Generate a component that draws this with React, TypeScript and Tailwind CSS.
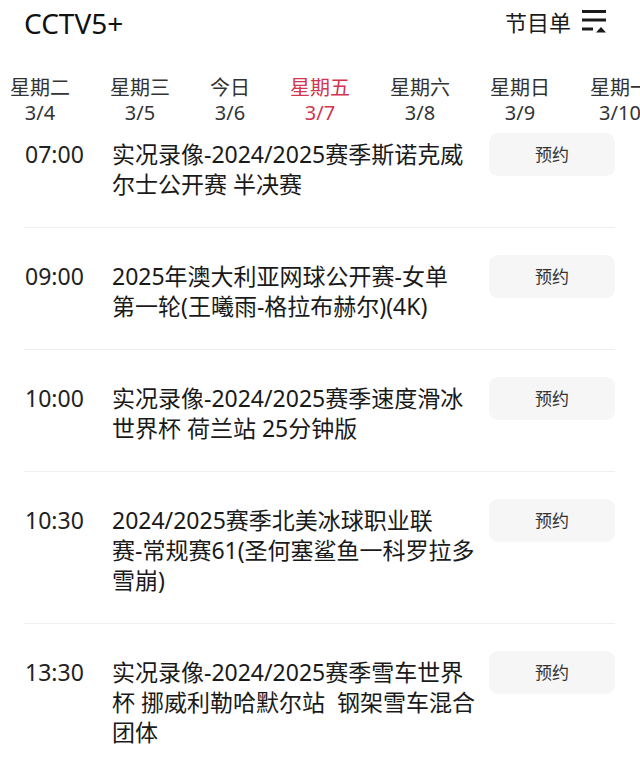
import React, { FC } from "react";

interface Day {
  label: string;
  date: string;
  active?: boolean;
}

interface Program {
  time: string;
  lines: string[];
}

const days: Day[] = [
  { label: "星期二", date: "3/4" },
  { label: "星期三", date: "3/5" },
  { label: "今日", date: "3/6" },
  { label: "星期五", date: "3/7", active: true },
  { label: "星期六", date: "3/8" },
  { label: "星期日", date: "3/9" },
  { label: "星期一", date: "3/10" },
];

const programs: Program[] = [
  { time: "07:00", lines: ["实况录像-2024/2025赛季斯诺克威", "尔士公开赛 半决赛"] },
  { time: "09:00", lines: ["2025年澳大利亚网球公开赛-女单", "第一轮(王曦雨-格拉布赫尔)(4K)"] },
  { time: "10:00", lines: ["实况录像-2024/2025赛季速度滑冰", "世界杯 荷兰站 25分钟版"] },
  {
    time: "10:30",
    lines: ["2024/2025赛季北美冰球职业联", "赛-常规赛61(圣何塞鲨鱼一科罗拉多", "雪崩)"],
  },
  {
    time: "13:30",
    lines: ["实况录像-2024/2025赛季雪车世界", "杯 挪威利勒哈默尔站  钢架雪车混合", "团体"],
  },
];

const ListIcon: FC = () => (
  <svg width="26" height="24" viewBox="0 0 26 24" fill="none">
    <line x1="1" y1="1.5" x2="25" y2="1.5" stroke="#1a1a1a" strokeWidth="3" />
    <line x1="1" y1="10" x2="25" y2="10" stroke="#1a1a1a" strokeWidth="3" />
    <line x1="1" y1="19" x2="12" y2="19" stroke="#1a1a1a" strokeWidth="3" />
    <polygon points="15,22.5 25,22.5 20,17" fill="#1a1a1a" />
  </svg>
);

const ProgramRow: FC<{ program: Program; first?: boolean }> = ({ program, first }) => (
  <div className={`flex items-start border-b border-[#efefef] pb-[28px] ${first ? "pt-[8px]" : "pt-[27px]"}`}>
    <div className="mt-[6px] w-[88px] shrink-0 pl-[1px] text-[23px] leading-[30px] text-[#222]">{program.time}</div>
    <div className="mt-[6px] mr-[9px] flex-1 text-[23px] leading-[30px] text-[#1a1a1a]">
      {program.lines.map((line, i) => (
        <div key={i} className="whitespace-pre">
          {line}
        </div>
      ))}
    </div>
    <button className="flex h-[43px] w-[126px] shrink-0 items-center justify-center rounded-[9px] bg-[#f6f6f6] text-[17px] text-[#333]">
      预约
    </button>
  </div>
);

const App: FC = () => {
  return (
    <div
      className="h-[759px] w-[640px] overflow-hidden bg-white"
      style={{ fontFamily: "'Noto Sans', 'Noto Sans CJK SC', sans-serif" }}
    >
      <div className="flex h-[46px] items-center justify-between pl-[24px] pr-[33px]">
        <div className="text-[28px] leading-none text-[#111]">CCTV5+</div>
        <div className="mb-[2px] flex items-center gap-[10px]">
          <span className="text-[22px] leading-none text-[#1a1a1a]">节目单</span>
          <ListIcon />
        </div>
      </div>

      <div className="mt-[29px] flex gap-[40px] whitespace-nowrap pl-[10px]">
        {days.map((d) => (
          <div
            key={d.label}
            className={`flex shrink-0 flex-col items-center text-[20px] leading-[25px] ${
              d.active ? "text-[#d0364f]" : "text-[#333]"
            }`}
          >
            <span>{d.label}</span>
            <span>{d.date}</span>
          </div>
        ))}
      </div>

      <div className="pl-[24px] pr-[25px]">
        {programs.map((p, i) => (
          <ProgramRow key={p.time} program={p} first={i === 0} />
        ))}
      </div>
    </div>
  );
};

export default App;
